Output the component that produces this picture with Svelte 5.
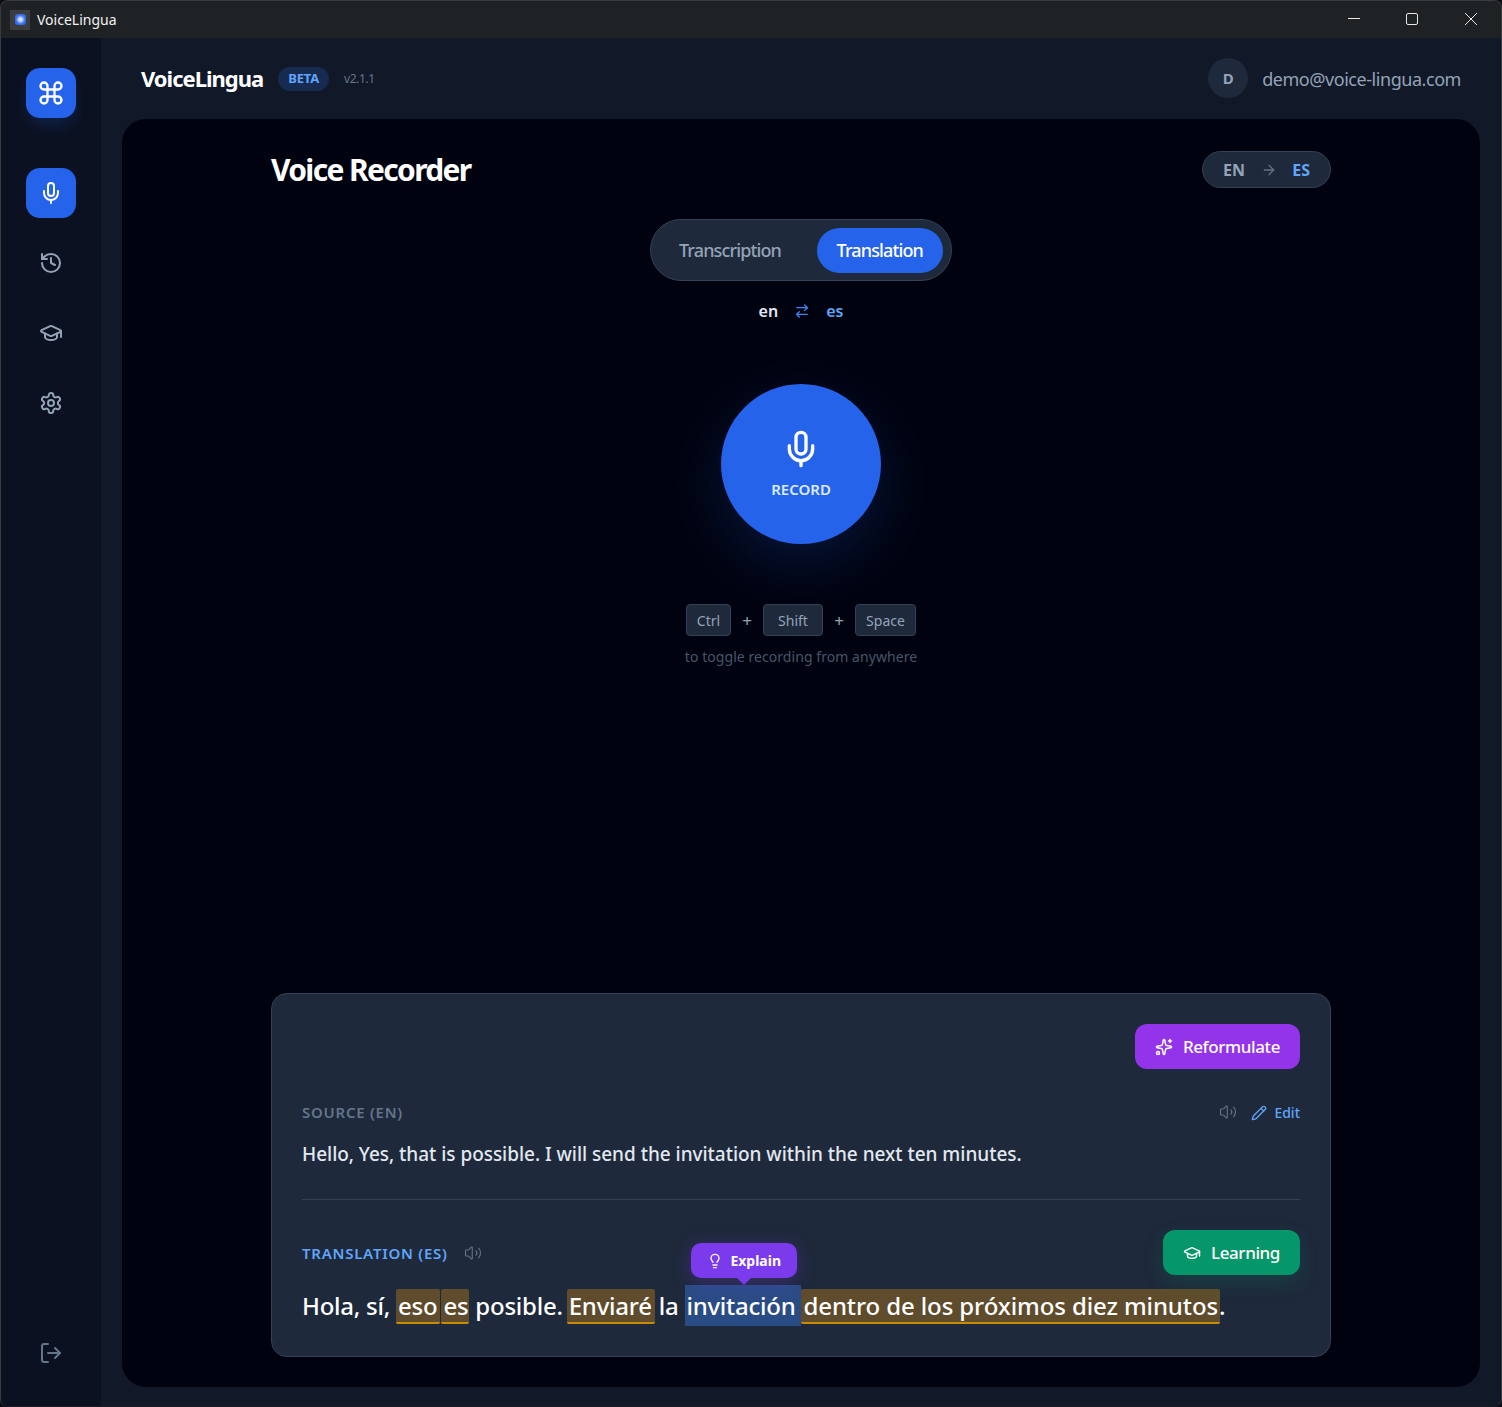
<script>
  const cmd = ['M15 6v12a3 3 0 1 0 3-3H6a3 3 0 1 0 3 3V6a3 3 0 1 0-3 3h12a3 3 0 1 0-3-3'];
  const mic = ['M12 2a3 3 0 0 0-3 3v7a3 3 0 0 0 6 0V5a3 3 0 0 0-3-3Z', 'M19 10v2a7 7 0 0 1-14 0v-2', 'M12 19v3'];
  const history = ['M3 12a9 9 0 1 0 9-9 9.75 9.75 0 0 0-6.74 2.74L3 8', 'M3 3v5h5', 'M12 7v5l4 2'];
  const cap = ['M21.42 10.922a1 1 0 0 0-.019-1.838L12.83 5.18a2 2 0 0 0-1.66 0L2.6 9.08a1 1 0 0 0 0 1.832l8.57 3.908a2 2 0 0 0 1.66 0z', 'M22 10v6', 'M6 12.5V16a6 3 0 0 0 12 0v-3.5'];
  const gear = ['M12.22 2h-.44a2 2 0 0 0-2 2v.18a2 2 0 0 1-1 1.73l-.43.25a2 2 0 0 1-2 0l-.15-.08a2 2 0 0 0-2.73.73l-.22.38a2 2 0 0 0 .73 2.73l.15.1a2 2 0 0 1 1 1.72v.51a2 2 0 0 1-1 1.74l-.15.09a2 2 0 0 0-.73 2.73l.22.38a2 2 0 0 0 2.73.73l.15-.08a2 2 0 0 1 2 0l.43.25a2 2 0 0 1 1 1.73V20a2 2 0 0 0 2 2h.44a2 2 0 0 0 2-2v-.18a2 2 0 0 1 1-1.73l.43-.25a2 2 0 0 1 2 0l.15.08a2 2 0 0 0 2.73-.73l.22-.39a2 2 0 0 0-.73-2.73l-.15-.08a2 2 0 0 1-1-1.74v-.5a2 2 0 0 1 1-1.74l.15-.09a2 2 0 0 0 .73-2.73l-.22-.38a2 2 0 0 0-2.73-.73l-.15.08a2 2 0 0 1-2 0l-.43-.25a2 2 0 0 1-1-1.73V4a2 2 0 0 0-2-2z', 'M15 12a3 3 0 1 1-6 0 3 3 0 0 1 6 0z'];
  const logout = ['M9 21H5a2 2 0 0 1-2-2V5a2 2 0 0 1 2-2h4', 'M16 17l5-5-5-5', 'M21 12H9'];
  const arrow = ['M5 12h14', 'm12 5 7 7-7 7'];
  const swap = ['m16 3 4 4-4 4', 'M20 7H4', 'm8 21-4-4 4-4', 'M4 17h16'];
  const sparkles = ['M11.017 2.814a1 1 0 0 1 1.966 0l1.051 5.558a2 2 0 0 0 1.594 1.594l5.558 1.051a1 1 0 0 1 0 1.966l-5.558 1.051a2 2 0 0 0-1.594 1.594l-1.051 5.558a1 1 0 0 1-1.966 0l-1.051-5.558a2 2 0 0 0-1.594-1.594l-5.558-1.051a1 1 0 0 1 0-1.966l5.558-1.051a2 2 0 0 0 1.594-1.594z', 'M20 2v4', 'M22 4h-4', 'M6 20a2 2 0 1 1-4 0 2 2 0 0 1 4 0z'];
  const volume = ['M11 4.702a.705.705 0 0 0-1.203-.498L6.413 7.587A1.4 1.4 0 0 1 5.416 8H3a1 1 0 0 0-1 1v6a1 1 0 0 0 1 1h2.416a1.4 1.4 0 0 1 .997.413l3.383 3.384A.705.705 0 0 0 11 19.298z', 'M16 9a5 5 0 0 1 0 6', 'M19.364 18.364a9 9 0 0 0 0-12.728'];
  const pencil = ['M21.174 6.812a1 1 0 0 0-3.986-3.987L3.842 16.174a2 2 0 0 0-.5.83l-1.321 4.352a.5.5 0 0 0 .623.622l4.353-1.32a2 2 0 0 0 .83-.497z', 'm15 5 4 4'];
  const bulb = ['M15 14c.2-1 .7-1.7 1.5-2.5 1-.9 1.5-2.2 1.5-3.5A6 6 0 0 0 6 8c0 1 .2 2.2 1.5 3.5.7.7 1.3 1.5 1.5 2.5', 'M9 18h6', 'M10 22h4'];
</script>

{#snippet icon(paths, size, sw = 2)}
  <svg width={size} height={size} viewBox="0 0 24 24" fill="none" stroke="currentColor" stroke-width={sw} stroke-linecap="round" stroke-linejoin="round">
    {#each paths as d}<path {d} />{/each}
  </svg>
{/snippet}

<div class="window">
  <header class="titlebar">
    <div class="appicon"><span class="appdot"></span></div>
    <span class="apptitle">VoiceLingua</span>
    <div class="winctl">
      <svg width="12" height="12" viewBox="0 0 12 12"><path d="M0 5.5h12" stroke="#e8e8e8" fill="none" /></svg>
      <svg width="12" height="12" viewBox="0 0 12 12"><rect x="0.5" y="0.5" width="11" height="11" rx="1.5" stroke="#e8e8e8" fill="none" /></svg>
      <svg class="close" width="12" height="12" viewBox="0 0 12 12"><path d="M0 0l12 12M12 0L0 12" stroke="#e8e8e8" fill="none" /></svg>
    </div>
  </header>

  <div class="body">
    <nav class="sidebar">
      <div class="logo">{@render icon(cmd, 28)}</div>
      <div class="navitem active">{@render icon(mic, 24)}</div>
      <div class="navitem">{@render icon(history, 24)}</div>
      <div class="navitem">{@render icon(cap, 24)}</div>
      <div class="navitem">{@render icon(gear, 24)}</div>
      <div class="navitem logout">{@render icon(logout, 24)}</div>
    </nav>

    <div class="main">
      <div class="topbar">
        <span class="brand">VoiceLingua</span>
        <span class="beta">BETA</span>
        <span class="version">v2.1.1</span>
        <div class="user">
          <span class="avatar">D</span>
          <span class="email">demo@voice-lingua.com</span>
        </div>
      </div>

      <main class="panel">
        <div class="content">
          <div class="head">
            <h1>Voice Recorder</h1>
            <div class="langpill">
              <span class="en">EN</span>
              <span class="pillarrow">{@render icon(arrow, 16)}</span>
              <span class="es">ES</span>
            </div>
          </div>

          <div class="tabs">
            <span class="tab">Transcription</span>
            <span class="tab on">Translation</span>
          </div>

          <div class="swap">
            <span class="from">en</span>
            <span class="swapicon">{@render icon(swap, 16)}</span>
            <span class="to">es</span>
          </div>

          <div class="record">
            {@render icon(mic, 40)}
            <span>RECORD</span>
          </div>

          <div class="keys">
            <kbd class="k1">Ctrl</kbd><span class="plus">+</span><kbd class="k2">Shift</kbd><span class="plus">+</span><kbd class="k3">Space</kbd>
          </div>
          <p class="hint">to toggle recording from anywhere</p>

          <section class="card">
            <div class="cardtop">
              <div class="btn purple">{@render icon(sparkles, 18)}<span>Reformulate</span></div>
            </div>
            <div class="labelrow">
              <span class="label">SOURCE (EN)</span>
              <div class="labelright">
                <span class="vol">{@render icon(volume, 18, 1.5)}</span>
                <span class="edit">{@render icon(pencil, 16)}<span>Edit</span></span>
              </div>
            </div>
            <p class="source">Hello, Yes, that is possible. I will send the invitation within the next ten minutes.</p>
            <div class="divider"></div>
            <div class="labelrow trans">
              <span class="label blue">TRANSLATION (ES)</span>
              <span class="vol second">{@render icon(volume, 18, 1.5)}</span>
              <div class="btn green">{@render icon(cap, 18)}<span>Learning</span></div>
            </div>
            <p class="target">Hola, sí, <span class="hl eso">eso</span><span class="hl gapl">es</span> posible. <span class="hl verb">Enviaré</span> la <span class="sel"><span class="tip">{@render icon(bulb, 16)}<span>Explain</span></span>invitación</span><span class="hl long">dentro de los próximos diez minutos</span>.</p>
          </section>
        </div>
      </main>
    </div>
  </div>
</div>

<style>
  :global(html), :global(body) { margin: 0; background: #0b0d12; }
  * { box-sizing: border-box; }
  .window {
    width: 1502px; height: 1407px; display: flex; flex-direction: column; overflow: hidden;
    border-radius: 8px; border: 1px solid #3a3b3d; border-bottom-color: #1a1d24;
    font-family: "Noto Sans", "Open Sans", sans-serif; background: #111827; color: #fff;
  }
  .titlebar { height: 37px; flex: none; display: flex; align-items: center; background: #1f2224; padding-left: 9px; }
  .appicon { width: 20px; height: 20px; background: #3a3c3e; display: flex; align-items: center; justify-content: center; }
  .appdot { width: 11px; height: 11px; border-radius: 3px; background: radial-gradient(circle, #dbe8ff 0 15%, #2f6cf0 60%); }
  .apptitle { font-size: 14px; margin-left: 7px; color: #f2f2f2; }
  .winctl { margin-left: auto; margin-top: -1px; display: flex; gap: 46px; padding-right: 24px; }
  .winctl svg { display: block; }
  .winctl .close { margin-left: 1px; }
  .body { flex: 1; display: flex; min-height: 0; }
  .sidebar { width: 100px; flex: none; background: #0b1120; display: flex; flex-direction: column; align-items: center; padding-top: 30px; padding-bottom: 28px; }
  .logo { width: 50px; height: 50px; border-radius: 14px; background: #2563eb; display: flex; align-items: center; justify-content: center; color: #fff; margin-bottom: 50px; box-shadow: 0 10px 15px -3px rgba(37,99,235,.2); }
  .navitem { width: 50px; height: 50px; border-radius: 14px; display: flex; align-items: center; justify-content: center; color: #94a3b8; margin-bottom: 20px; }
  .navitem.active { background: #2563eb; color: #fff; }
  .navitem.logout { margin-top: auto; margin-bottom: 0; color: #64748b; }
  .main { flex: 1; min-width: 0; display: flex; flex-direction: column; background: #111827; padding: 0 21px 19px 21px; }
  .topbar { height: 81px; flex: none; display: flex; align-items: center; padding: 0 19px 0 19px; }
  .brand { font-size: 22px; font-weight: 700; letter-spacing: -1px; margin-bottom: 1px; }
  .beta { margin-left: 15px; height: 24px; padding: 0 10px 1px; border-radius: 12px; background: #172a50; color: #60a5fa; font-size: 13px; font-weight: 700; letter-spacing: -0.2px; display: flex; align-items: center; }
  .version { margin-left: 15px; font-size: 12px; letter-spacing: -0.4px; color: #64748b; }
  .user { margin-left: auto; display: flex; align-items: center; gap: 14px; }
  .avatar { width: 40px; height: 40px; margin-top: -1px; border-radius: 50%; background: #1e293b; color: #94a3b8; font-size: 15px; font-weight: 700; display: flex; align-items: center; justify-content: center; }
  .email { font-size: 18px; letter-spacing: -0.45px; color: #94a3b8; }
  .panel { flex: 1; min-height: 0; background: #00030f; border-radius: 24px; display: flex; justify-content: center; padding: 32px 0 30px; }
  .content { width: 1060px; display: flex; flex-direction: column; align-items: center; }
  .head { width: 100%; display: flex; justify-content: space-between; align-items: center; height: 37px; }
  h1 { margin: 0; font-size: 30px; font-weight: 700; letter-spacing: -1.65px; color: #fff; }
  .langpill { width: 129px; height: 37px; border-radius: 19px; background: #1e293b; border: 1px solid #334155; display: flex; align-items: center; justify-content: space-between; padding: 0 20px; font-size: 16px; font-weight: 700; }
  .en { color: #94a3b8; }
  .es { color: #60a5fa; }
  .pillarrow { color: #64748b; display: flex; }
  .tabs { margin-top: 31px; width: 302px; height: 62px; flex: none; border-radius: 31px; background: #1e293b; border: 1px solid #334155; display: flex; align-items: center; justify-content: space-between; padding: 0 8px; font-size: 18px; letter-spacing: -0.87px; }
  .tab { padding: 0 20px; height: 45px; display: flex; align-items: center; border-radius: 23px; color: #94a3b8; font-weight: 500; }
  .tab.on { background: #2563eb; color: #fff; }
  .swap { margin-top: 18px; display: flex; align-items: center; gap: 16px; font-size: 16px; font-weight: 600; height: 24px; }
  .from { color: #e2e8f0; }
  .to { color: #60a5fa; }
  .swapicon { color: #3b82f6; display: flex; }
  .record { margin-top: 61px; width: 160px; height: 160px; border-radius: 50%; background: #2563eb; flex: none; display: flex; flex-direction: column; align-items: center; justify-content: center; gap: 10px; box-shadow: 0 20px 60px rgba(37,99,235,.2); }
  .record svg { display: block; }
  .record span { font-size: 15px; line-height: 20px; font-weight: 600; color: #dbeafe; }
  .keys { margin-top: 60px; display: flex; align-items: center; font-size: 14px; }
  kbd { font-family: inherit; height: 32px; border-radius: 4px; background: #1e293b; border: 1px solid #334155; color: #94a3b8; display: flex; align-items: center; justify-content: center; }
  .k1 { width: 45px; } .k2 { width: 60px; } .k3 { width: 61px; }
  .plus { width: 32px; text-align: center; color: #94a3b8; font-size: 17px; }
  .hint { margin: 11px 0 0; font-size: 14px; letter-spacing: 0.06px; color: #475569; }
  .card { margin-top: auto; width: 100%; height: 364px; flex: none; background: #1e293b; border: 1px solid #334155; border-radius: 16px; padding: 30px; }
  .cardtop { display: flex; justify-content: flex-end; height: 45px; }
  .btn { display: flex; align-items: center; gap: 10px; height: 45px; border-radius: 12px; padding: 0 20px; font-size: 17px; letter-spacing: -0.4px; font-weight: 500; color: #fff; }
  .purple { background: #9333ea; }
  .green { background: #059669; margin-left: auto; box-shadow: 0 8px 20px rgba(5,150,105,.2); }
  .labelrow { margin-top: 30px; height: 26px; display: flex; align-items: center; }
  .label { font-size: 15px; font-weight: 600; letter-spacing: 0.75px; color: #64748b; }
  .label.blue { color: #60a5fa; }
  .labelright { margin-left: auto; display: flex; align-items: center; gap: 14px; }
  .vol { color: #64748b; display: flex; }
  .vol.second { margin-left: 16px; }
  .edit { display: flex; align-items: center; gap: 7px; padding-top: 1px; color: #60a5fa; font-size: 14px; font-weight: 500; }
  .source { margin: 14px 0 0; font-size: 19px; line-height: 30px; letter-spacing: -0.035px; font-weight: 500; color: #e2e8f0; }
  .divider { height: 1px; background: #334155; margin-top: 30px; }
  .trans { margin-top: 30px; height: 45px; }
  .target { margin: 13px 0 0; font-size: 24px; line-height: 36px; letter-spacing: -0.25px; color: #fff; font-weight: 500; white-space: nowrap; }
  .hl { background: rgba(245,158,11,.3); border-bottom: 2px solid #ca8a04; border-radius: 2px; padding: 0 2px; }
  .eso { padding-right: 3px; }
  .gapl { margin-left: 1px; padding-right: 1px; }
  .verb { margin-left: -2px; margin-right: -2px; padding-right: 3px; }
  .long { margin-right: -1px; letter-spacing: -0.11px; }
  .sel { position: relative; margin-left: 1px; background: rgba(59,130,246,.4); padding: 4px 6px 4px 1px; }
  .tip { position: absolute; left: 6px; top: -42px; height: 35px; padding: 0 16px; border-radius: 10px; background: #7c3aed; display: flex; align-items: center; gap: 7px; font-size: 14px; font-weight: 700; letter-spacing: 0; color: #fff; box-shadow: 0 4px 20px rgba(124,58,237,.3); }
  .tip::after { content: ""; position: absolute; left: 46px; bottom: -7px; border-left: 7px solid transparent; border-right: 7px solid transparent; border-top: 7px solid #7c3aed; }
</style>
